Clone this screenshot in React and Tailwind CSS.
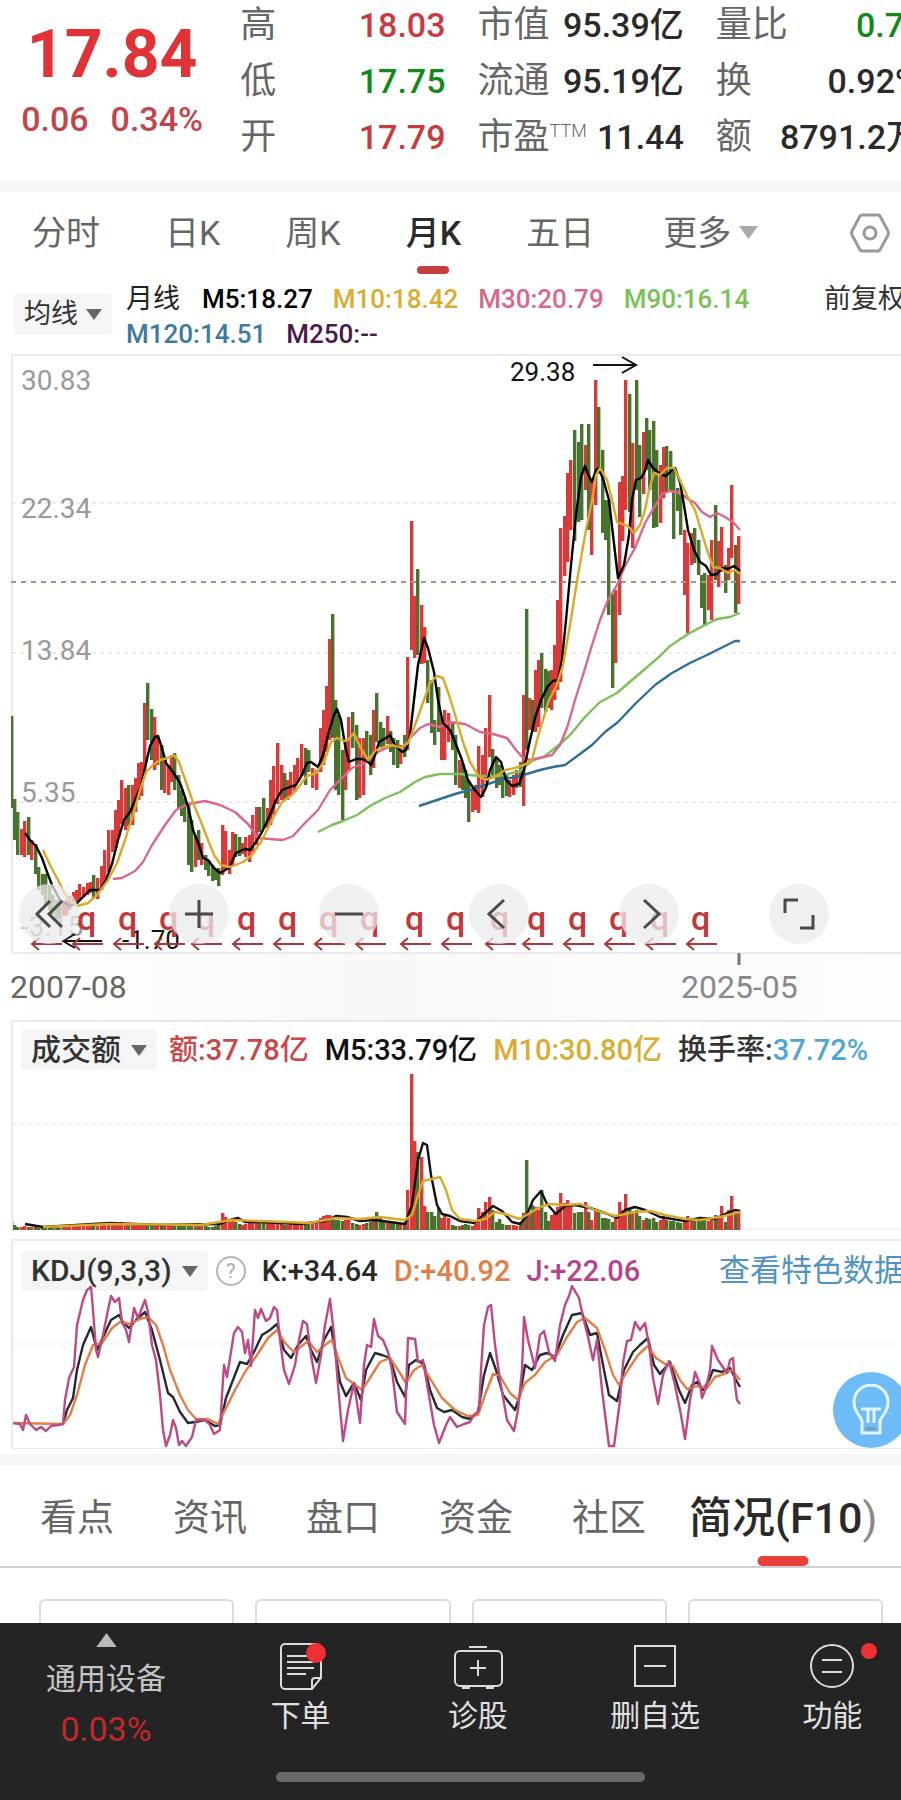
import { clsx } from 'clsx';

// x, high, low, direction (u = up, d = down), turnover bar height
const CANDLES = `
12 716 808 d 9|15 799 840 d 5|18 812 855 d 3|22 829 855 u 3|25 821 857 u 4|29 817 855 d 3|32 840 860 u 3|36 844 874 d 3
39 867 890 d 2|43 874 895 d 2|46 874 905 d 2|50 885 910 d 2|53 895 915 d 3|57 900 918 d 3|60 903 918 d 2|64 902 916 u 3
67 900 915 u 4|70 896 910 u 4|74 892 906 u 5|77 890 903 u 4|80 884 900 u 4|84 887 897 u 5|88 883 895 u 5|91 882 893 u 4
94 875 898 d 5|98 878 899 u 4|102 866 890 u 5|105 850 884 u 6|109 830 872 u 6|113 830 852 u 6|116 810 848 u 6|119 800 838 u 7
122 780 824 u 8|126 788 830 u 6|129 785 826 d 6|133 785 825 u 7|136 778 812 u 6|139 763 800 u 7|142 762 796 u 6|145 703 775 u 7
148 683 740 d 7|152 709 760 d 6|155 717 770 u 6|158 737 765 u 5|162 745 790 d 5|165 757 793 u 5|169 765 795 u 5|172 755 782 u 5
175 753 790 d 6|179 775 808 d 5|182 790 816 d 4|185 798 822 d 4|189 805 865 d 4|192 820 872 d 4|196 835 867 u 7|199 830 860 d 6
202 843 865 u 5|206 855 870 d 4|209 860 876 d 3|213 865 881 d 3|216 870 880 d 4|219 868 886 d 5|223 825 875 u 17|226 831 870 u 13
230 850 874 u 8|233 832 865 u 10|236 834 857 d 8|240 837 856 d 6|243 843 854 u 5|246 837 857 u 6|250 835 862 u 7|253 815 852 u 9
257 807 845 u 9|260 807 832 d 8|264 798 828 d 8|268 808 828 u 7|271 780 825 u 8|274 766 815 u 7|278 743 804 u 8|282 765 800 u 7
285 773 800 d 5|288 780 800 u 5|291 772 796 u 6|295 765 792 u 6|298 758 782 u 6|302 744 776 u 7|306 748 785 d 6|309 750 772 d 6
313 768 788 u 6|317 770 790 u 7|321 728 772 u 12|324 710 765 u 14|327 686 752 u 15|330 639 740 u 15|333 614 738 d 12|336 700 790 d 10
339 715 795 d 10|343 750 820 d 9|346 740 790 u 10|349 717 770 u 10|353 712 748 d 7|357 725 800 d 6|360 738 798 u 5|364 738 795 u 6
367 731 762 d 7|371 735 775 d 8|374 710 768 u 9|377 693 742 d 18|381 722 747 d 12|384 728 750 d 10|388 716 744 u 9|391 731 752 d 8
394 738 765 d 7|398 740 768 d 6|401 745 764 u 6|405 735 757 d 7|408 657 750 u 40|412 521 650 u 156|415 596 658 u 89|418 569 655 d 78
422 605 664 u 73|425 627 663 u 24|428 660 703 d 18|432 680 733 d 18|435 720 745 d 14|439 687 732 d 22|442 717 760 u 12|445 710 760 u 14
449 713 742 u 12|453 722 750 d 5|456 735 785 d 4|460 760 788 u 4|463 763 790 d 5|466 770 798 d 6|469 780 822 d 5|473 790 812 u 4
476 785 810 u 6|479 746 813 u 22|483 755 797 u 18|486 728 782 u 28|490 695 757 u 33|493 749 777 d 20|497 757 788 d 8|500 765 785 d 11
503 770 798 d 6|507 775 796 d 5|510 780 797 u 5|514 775 795 u 5|517 770 788 u 4|521 762 787 d 8|524 695 806 u 17|527 609 750 d 70
530 698 730 u 17|533 700 732 d 25|536 670 732 u 23|539 660 727 u 20|542 653 708 d 40|546 669 712 d 18|549 671 708 d 9|552 670 710 u 15
555 645 700 u 17|558 600 690 u 23|561 528 682 u 37|565 516 576 u 27|568 473 562 u 30|571 460 530 u 24|575 430 541 d 17|579 442 522 d 18
582 424 520 d 18|586 445 490 u 28|589 424 530 d 18|592 480 555 u 10|596 380 505 u 19|599 407 474 d 18|603 450 533 d 12|606 500 540 d 12
609 500 615 d 11|613 594 688 d 8|616 590 663 u 14|620 482 615 u 28|623 476 541 u 20|626 380 510 u 36|630 394 512 d 22|633 443 548 u 18
637 380 490 d 20|640 445 517 d 14|644 432 494 u 10|647 418 470 d 12|650 430 490 d 11|654 421 528 d 12|657 450 527 d 8|661 465 523 u 10
664 447 498 u 14|667 446 492 d 10|671 451 490 d 9|674 470 539 d 9|678 488 511 d 8|681 495 535 d 7|685 530 595 u 12|688 543 633 u 14
692 533 565 u 12|695 528 563 d 10|699 540 575 d 9|702 575 608 d 10|705 573 626 d 10|709 575 610 u 9|712 540 620 u 12|716 505 580 d 15
719 541 587 u 13|722 527 572 u 24|726 565 593 d 8|729 548 580 u 20|732 485 558 u 34|736 545 613 d 18|739 536 604 u 20`
  .trim()
  .split(/[|\n]/)
  .map((row) => {
    const [x, high, low, dir, turnover] = row.split(' ');
    return { x: +x, high: +high, low: +low, up: dir === 'u', turnover: +turnover };
  });

const PRICE_LINES = [
  {
    color: '#2f6f96',
    points: '419,806 440,799 455,794 470,790 485,785 500,780 520,776 540,770 553,767 565,765 580,754 592,745 605,732 618,722 635,704 655,685 672,673 690,663 707,655 725,646 735,641 740,641',
  },
  {
    color: '#7cc05a',
    points: '318,832 332,825 343,821 357,815 370,806 385,798 400,792 415,782 425,777 440,774 460,774 480,776 500,776 520,771 532,761 545,756 560,744 570,735 585,717 600,702 617,693 632,680 645,669 660,656 670,646 688,634 703,626 717,619 730,617 740,613',
  },
  {
    color: '#d9688c',
    points: '113,879 122,878 135,871 143,862 152,845 165,825 176,810 188,804 205,801 220,805 235,812 248,824 258,838 270,839 283,840 293,836 305,823 318,810 330,790 342,778 352,768 365,763 378,752 393,745 402,748 410,738 420,728 428,724 440,727 450,722 465,724 480,732 493,734 507,738 516,750 523,758 530,760 540,758 552,755 560,745 567,728 575,700 583,675 592,645 600,620 608,600 617,585 625,566 635,548 645,523 655,506 662,494 670,491 680,493 688,499 695,503 702,512 710,517 717,513 725,517 733,522 740,530',
  },
  {
    color: '#000000',
    points: '25,833 30,840 36,846 42,858 47,872 52,885 60,900 70,906 77,903 85,895 90,890 100,890 106,880 112,864 118,840 124,820 130,812 135,800 141,786 145,768 150,746 155,737 158,736 162,748 166,763 173,772 180,783 185,797 189,810 193,830 199,845 203,858 208,860 214,868 220,873 229,868 236,853 245,849 250,850 256,842 262,832 270,815 276,800 282,790 290,787 296,785 302,775 307,763 311,762 318,767 323,755 328,735 334,715 337,709 341,720 345,745 349,762 356,759 362,759 367,761 371,765 375,755 379,742 386,738 390,735 395,745 402,752 406,750 410,735 414,700 418,665 424,638 428,648 434,672 438,700 443,723 450,730 455,742 462,760 468,780 474,789 481,797 486,788 490,770 496,757 501,762 506,780 512,786 519,784 524,770 529,745 535,718 541,700 548,686 553,681 558,680 562,660 566,620 571,565 576,515 581,477 585,466 588,474 592,482 596,470 599,468 604,482 609,500 613,535 618,578 624,565 629,535 632,500 636,480 641,478 645,471 648,460 653,468 660,474 666,476 672,470 675,468 680,482 684,505 688,530 694,550 700,562 706,566 711,575 717,574 722,568 728,569 734,566 740,571',
  },
  {
    color: '#dba92a',
    points: '43,850 50,865 58,880 67,898 77,906 88,903 97,895 108,880 117,863 125,840 133,815 140,790 146,772 153,765 160,760 168,758 174,755 179,762 187,785 194,805 201,822 208,840 214,855 221,865 230,867 243,862 252,855 262,840 272,820 282,802 292,795 300,785 307,776 316,773 324,762 331,742 337,738 344,741 348,740 354,733 360,747 368,760 376,750 384,747 393,745 401,748 408,743 415,725 424,700 430,683 437,676 443,678 449,695 456,718 463,742 470,762 478,775 485,780 495,777 505,770 515,768 524,765 532,760 537,740 543,720 549,700 556,687 563,665 570,625 578,575 586,530 592,500 596,475 600,468 607,480 612,500 617,522 622,524 628,526 634,533 640,525 645,510 649,490 654,473 660,475 667,468 674,468 680,480 688,498 695,510 701,530 707,550 713,567 720,568 728,573 735,570 740,574',
  },
];

const TURNOVER_LINES = [
  {
    color: '#111111',
    points: '25,1224 43,1227 110,1223 160,1225 220,1224 230,1220 238,1218 245,1222 260,1222 300,1224 325,1221 336,1216 347,1217 360,1221 375,1220 390,1222 405,1224 412,1205 418,1160 423,1143 427,1145 431,1175 437,1205 442,1214 450,1216 460,1221 475,1223 483,1215 493,1206 502,1211 512,1222 520,1224 526,1217 533,1200 541,1191 547,1204 556,1214 565,1206 575,1205 590,1208 605,1213 617,1218 625,1210 635,1207 645,1210 660,1217 685,1221 700,1218 715,1219 725,1214 735,1210 740,1211',
  },
  {
    color: '#dba92a',
    points: '43,1227 110,1224 200,1225 232,1220 260,1221 310,1223 335,1218 360,1219 380,1217 405,1220 412,1215 418,1195 423,1181 432,1179 440,1177 446,1190 452,1210 460,1219 475,1221 485,1219 495,1212 505,1214 520,1219 530,1213 540,1207 550,1204 565,1205 580,1204 595,1210 615,1216 635,1212 650,1211 665,1215 685,1219 700,1220 720,1217 740,1212',
  },
];

const KDJ_LINES = [
  {
    color: '#262a2e',
    points: '63,1424 67,1410 73,1398 77,1370 83,1345 91,1327 97,1350 104,1335 111,1320 119,1315 123,1322 129,1328 137,1319 145,1312 152,1330 160,1360 168,1393 173,1397 180,1412 188,1423 195,1422 205,1420 215,1426 220,1425 226,1398 233,1380 240,1362 247,1364 254,1352 262,1335 270,1330 277,1324 284,1350 291,1358 298,1345 306,1336 311,1350 317,1362 324,1340 331,1327 335,1350 340,1382 346,1396 354,1383 361,1400 366,1370 375,1353 382,1355 390,1358 397,1382 405,1397 409,1365 416,1360 424,1364 430,1390 437,1408 444,1412 452,1410 462,1417 470,1419 478,1412 484,1375 490,1353 496,1370 503,1395 515,1410 520,1395 525,1365 532,1370 540,1355 547,1353 555,1357 563,1335 572,1315 582,1313 590,1335 597,1333 603,1365 609,1395 617,1401 624,1370 633,1352 640,1345 648,1338 654,1365 660,1374 670,1362 679,1390 685,1403 692,1385 697,1382 703,1390 709,1380 713,1370 722,1372 730,1368 736,1380 740,1387',
  },
  {
    color: '#e08048',
    points: '12,1423 63,1424 70,1415 77,1395 85,1365 93,1345 102,1343 112,1328 120,1322 130,1324 140,1319 148,1317 156,1325 163,1345 170,1370 180,1395 188,1410 196,1419 208,1419 218,1424 226,1408 235,1390 245,1372 257,1355 268,1338 277,1330 285,1343 294,1352 303,1345 308,1341 317,1352 325,1345 332,1340 339,1360 346,1378 354,1384 362,1390 370,1378 380,1362 390,1358 398,1370 406,1383 414,1370 422,1365 431,1380 442,1398 455,1410 468,1416 478,1415 485,1395 493,1374 500,1376 510,1393 518,1400 525,1383 535,1375 545,1362 557,1355 567,1337 577,1322 585,1318 597,1328 605,1350 613,1375 619,1385 628,1370 638,1355 648,1346 656,1358 665,1364 673,1366 680,1380 687,1389 697,1386 707,1388 715,1377 724,1374 732,1370 740,1380',
  },
  {
    color: '#bb4a86',
    points: '12,1423 20,1424 23,1430 26,1415 30,1424 36,1430 41,1427 46,1431 51,1426 58,1425 63,1424 65,1400 69,1378 74,1367 77,1325 83,1300 87,1290 91,1287 93,1310 96,1350 98,1357 103,1335 108,1310 111,1296 115,1302 119,1298 122,1322 126,1330 129,1342 134,1308 138,1318 145,1300 148,1312 152,1345 156,1360 160,1395 163,1430 166,1446 170,1435 173,1420 176,1428 179,1445 182,1441 186,1446 192,1437 196,1420 205,1420 210,1425 214,1434 220,1430 222,1395 224,1365 227,1377 230,1358 234,1333 238,1327 242,1332 245,1353 248,1340 251,1366 255,1310 258,1318 261,1309 266,1321 270,1318 274,1307 277,1310 280,1340 284,1370 289,1384 295,1365 299,1340 303,1321 307,1324 311,1355 316,1383 321,1355 325,1325 330,1299 334,1335 338,1385 343,1441 348,1410 354,1383 360,1423 364,1365 367,1345 371,1347 374,1319 378,1336 383,1340 388,1352 392,1370 397,1412 405,1424 407,1365 408,1338 415,1339 418,1362 423,1360 428,1390 434,1425 439,1443 446,1425 450,1417 457,1427 464,1424 470,1422 474,1415 479,1410 481,1370 484,1325 488,1307 491,1305 495,1345 500,1380 507,1420 514,1431 518,1410 522,1370 524,1317 528,1340 535,1368 540,1335 544,1331 549,1352 555,1361 560,1325 565,1305 569,1296 572,1286 579,1298 583,1317 588,1337 593,1360 597,1340 602,1390 609,1446 614,1446 620,1400 623,1363 627,1341 631,1340 635,1322 640,1330 645,1323 649,1345 653,1378 658,1404 663,1375 669,1361 675,1385 681,1415 685,1439 690,1400 695,1372 700,1384 702,1398 706,1388 710,1370 712,1346 718,1360 727,1373 730,1360 733,1358 735,1385 737,1400 740,1404',
  },
];

// start of every dividend arrow on the time axis
const DIVIDENDS = [31, 72, 113, 154, 191, 232, 273, 314, 355, 400, 441, 485, 522, 563, 604, 645, 686];

const QUOTES = [
  [
    { label: '高', value: '18.03', tone: 'text-[#c9393d]' },
    { label: '低', value: '17.75', tone: 'text-[#118a1c]' },
    { label: '开', value: '17.79', tone: 'text-[#c9393d]' },
  ],
  [
    { label: '市值', value: '95.39亿' },
    { label: '流通', value: '95.19亿' },
    { label: '市盈', sup: 'TTM', value: '11.44' },
  ],
  [
    { label: '量比', value: '0.7', tone: 'text-[#118a1c] pr-6' },
    { label: '换', value: '0.92%', tone: 'text-[#2a2a2a] pr-2' },
    { label: '额', value: '8791.2万', tone: 'text-[#2a2a2a] pr-2' },
  ],
];

const PERIODS = ['分时', '日K', '周K', '月K', '五日'];
const SECTIONS = ['看点', '资讯', '盘口', '资金', '社区'];

function Caret({ up = false, className }) {
  return (
    <svg viewBox="0 0 16 11" className={className} fill="currentColor" aria-hidden="true">
      <path d={up ? 'M8 0 16 11H0z' : 'M0 0h16L8 11z'} />
    </svg>
  );
}

function Lines({ lines }) {
  return lines.map((line) => (
    <polyline key={line.color} points={line.points} fill="none" stroke={line.color} strokeWidth="2.4" strokeLinejoin="round" />
  ));
}

function QuoteHeader() {
  return (
    <header className="-mt-[3px] -mr-[27px] grid grid-cols-[208fr_205fr_206fr_212fr] gap-x-8 pb-4">
      <div className="pt-4 pl-4 text-center">
        <div className="pt-1 text-[66px] leading-[76px] font-bold text-[#e03338]">17.84</div>
        <div className="flex justify-center gap-[22px] pt-[3px] text-[34px] leading-[46px] font-medium text-[#c2454a]">
          <span>0.06</span>
          <span>0.34%</span>
        </div>
      </div>
      {QUOTES.map((column) => (
        <dl key={column[0].label}>
          {column.map((q) => (
            <div key={q.label} className="flex h-14 items-center justify-between whitespace-nowrap">
              <dt className="flex text-4xl text-[#666]">
                {q.label}
                {q.sup && <sup className="top-1 text-lg leading-5 font-light">{q.sup}</sup>}
              </dt>
              <dd className={clsx('text-[34px] font-medium', q.tone ?? 'text-[#2a2a2a]')}>{q.value}</dd>
            </div>
          ))}
        </dl>
      ))}
    </header>
  );
}

function PeriodTabs() {
  return (
    <nav className="flex items-center gap-[65px] pr-[10px] pl-8 text-[34px] whitespace-nowrap text-[#666]">
      {PERIODS.map((p) => (
        <button key={p} type="button" className={clsx('relative h-[82px]', p === '月K' && 'font-medium text-[#2a2a2a]')}>
          {p}
          {p === '月K' && <span className="absolute bottom-0 left-1/2 h-2 w-8 -translate-x-1/2 rounded-full bg-[#c93c40]" />}
        </button>
      ))}
      <button type="button" className="ml-1 flex h-[82px] items-center gap-2">
        更多
        <Caret className="w-[19px] text-[#aaa]" />
      </button>
      <button type="button" aria-label="设置" className="ml-auto shrink-0">
        <svg viewBox="0 0 42 40" className="w-[42px]" fill="none" stroke="#999" strokeWidth="3">
          <path d="M13 2h16a3 3 0 0 1 2 1l8 15a4 4 0 0 1 0 4l-8 15a3 3 0 0 1-2 1H13a3 3 0 0 1-2-1L3 22a4 4 0 0 1 0-4l8-15a3 3 0 0 1 2-1z" />
          <circle cx="21" cy="20" r="6" />
        </svg>
      </button>
    </nav>
  );
}

function AverageLegend() {
  return (
    <div className="flex items-start pt-2 pb-[2px] pl-[14px] text-[26px] leading-[35px] font-medium whitespace-nowrap">
      <button type="button" className="mt-3 flex h-[41px] items-center gap-2 rounded bg-[#f5f5f5] px-[10px] text-[27px] font-normal text-[#333]">
        均线
        <Caret className="w-4 text-[#666]" />
      </button>
      <div className="ml-[14px] grow">
        <div className="flex gap-5">
          <span className="pr-[2px] text-[27px] font-normal text-[#222]">月线</span>
          <span className="text-black">M5:18.27</span>
          <span className="text-[#d9ac33]">M10:18.42</span>
          <span className="text-[#d9688c]">M30:20.79</span>
          <span className="text-[#7cc05a]">M90:16.14</span>
        </div>
        <div className="flex gap-5">
          <span className="text-[#3d7b9c]">M120:14.51</span>
          <span className="text-[#4a1a4c]">M250:--</span>
        </div>
      </div>
      <button type="button" className="-mr-1 text-[27px] font-normal text-[#333]">前复权</button>
    </div>
  );
}

function ChartButton({ label, children }) {
  return (
    <button type="button" aria-label={label} className="flex size-[60px] items-center justify-center rounded-full bg-[#ebebeb]/75">
      <svg viewBox="0 0 32 32" className="size-8" fill="none" stroke="#4a4a4a" strokeWidth="3">
        {children}
      </svg>
    </button>
  );
}

function PriceChart() {
  return (
    <section className="relative pl-[11px]">
      <svg viewBox="11 354 890 666" className="block w-full" role="img" aria-label="月K">
        <defs>
          <linearGradient id="axisShade" x1="0" x2="1">
            <stop offset="0" stopColor="#fff" />
            <stop offset="0.4" stopColor="#f8f8f8" />
            <stop offset="1" stopColor="#fdfdfd" />
          </linearGradient>
        </defs>
        <rect x="11" y="954" width="890" height="66" fill="url(#axisShade)" />
        <path d="M901 355H12V953H901" fill="none" stroke="#ebebeb" strokeWidth="2" />
        <path d="M12 503H901M12 653H901M12 802H901" stroke="#d8d8d8" strokeDasharray="4 4" />
        <g fontSize="28" fill="#999">
          <text x="21" y="390">30.83</text>
          <text x="21" y="518">22.34</text>
          <text x="21" y="660">13.84</text>
          <text x="21" y="802">5.35</text>
          <text x="21" y="936">-3.15</text>
        </g>
        {CANDLES.map((c) => (
          <rect key={c.x} x={c.x - 2} y={c.high} width="3.4" height={c.low - c.high} fill={c.up ? '#d83a3a' : '#4a722f'} />
        ))}
        <path d="M11 582H901" stroke="#a8977c" strokeWidth="2" strokeDasharray="5 5" />
        <Lines lines={PRICE_LINES} />
        <g fontSize="26" fill="#111">
          <text x="510" y="381">29.38</text>
          <text x="122" y="949">-1.70</text>
        </g>
        <path d="M593 365H636M622 357l14 8-14 8M102 941H63M75 934l-12 7 12 7" fill="none" stroke="#111" strokeWidth="2" />
        <g fill="#c2383c">
          {DIVIDENDS.map((x) => (
            <g key={x}>
              {x > 31 && <text x={x + 5} y="930" fontSize="34" fontWeight="500">q</text>}
              <path d={`M${x + 31} 944H${x + 1}M${x + 8} 938l-7 6 7 6`} fill="none" stroke="#a8383c" strokeWidth="2" />
            </g>
          ))}
        </g>
        <path d="M739 953V965" stroke="#777" strokeWidth="3" />
        <g fontSize="32">
          <text x="10" y="998" fill="#666">2007-08</text>
          <text x="681" y="998" fill="#888">2025-05</text>
        </g>
      </svg>
      <div className="absolute bottom-[76px] left-[19px] flex gap-[90px]">
        <ChartButton label="最早">
          <path d="M17 3 4 16l13 13M29 3 16 16l13 13" />
        </ChartButton>
        <ChartButton label="放大">
          <path d="M16 2v28M2 16h28" />
        </ChartButton>
        <ChartButton label="缩小">
          <path d="M2 16h28" />
        </ChartButton>
        <ChartButton label="向左">
          <path d="M21 2 6 16l15 14" />
        </ChartButton>
        <ChartButton label="向右">
          <path d="m11 2 15 14-15 14" />
        </ChartButton>
        <ChartButton label="全屏">
          <path d="M2 15V2h13M30 17v13H17" />
        </ChartButton>
      </div>
    </section>
  );
}

function IndicatorButton({ children }) {
  return (
    <button type="button" className="flex h-10 items-center gap-[10px] rounded bg-[#f5f5f5] px-[10px] text-[30px] text-[#333]">
      {children}
      <Caret className="w-4 text-[#666]" />
    </button>
  );
}

function TurnoverPanel() {
  return (
    <section className="ml-[11px] border-t-2 border-l-2 border-[#ebebeb]">
      <div className="flex items-center gap-4 pt-2 pl-2 text-[29px] leading-10 font-medium whitespace-nowrap">
        <IndicatorButton>成交额</IndicatorButton>
        <span className="-ml-1 text-[#c9484c]">额:37.78亿</span>
        <span className="text-[#111]">M5:33.79亿</span>
        <span className="text-[#d9ac33]">M10:30.80亿</span>
        <span className="text-[#333]">
          换手率:<span className="text-[#4fa6d0]">37.72%</span>
        </span>
      </div>
      <svg viewBox="13 1070 888 161" className="block w-full" role="img" aria-label="成交额">
        <path d="M13 1124H901" stroke="#e4e4e4" strokeDasharray="4 4" />
        {CANDLES.map((c) => (
          <rect key={c.x} x={c.x - 2} y={1230 - c.turnover} width="3.4" height={c.turnover} fill={c.up ? '#d83a3a' : '#4a722f'} />
        ))}
        <path d="M741 1229H901" stroke="#e6e6e6" />
        <Lines lines={TURNOVER_LINES} />
      </svg>
    </section>
  );
}

function KdjPanel() {
  return (
    <section className="relative mt-2 ml-[11px] border-t-2 border-b border-l-2 border-[#ebebeb]">
      <div className="flex items-center gap-4 pt-[10px] pl-2 text-[29px] leading-10 font-medium whitespace-nowrap">
        <IndicatorButton>KDJ(9,3,3)</IndicatorButton>
        <button
          type="button"
          aria-label="指标说明"
          className="-ml-2 flex size-[30px] items-center justify-center rounded-full border-2 border-[#b5b5b5] text-xl font-normal text-[#aaa]"
        >
          ?
        </button>
        <span className="text-[#2a2a2a]">K:+34.64</span>
        <span className="text-[#e08048]">D:+40.92</span>
        <span className="text-[#b5448a]">J:+22.06</span>
        <a href="#feature" className="-mr-1 ml-auto text-[31px] font-normal text-[#4f94c4]">
          查看特色数据
        </a>
      </div>
      <svg viewBox="13 1285 888 163" className="relative -mt-[6px] block w-full" role="img" aria-label="KDJ">
        <path d="M13 1344H901" stroke="#e4e4e4" strokeDasharray="4 4" />
        <Lines lines={KDJ_LINES} />
      </svg>
      <button type="button" aria-label="提示" className="absolute -right-2 bottom-0 flex size-[76px] items-center justify-center rounded-full bg-[#6dbbf7]">
        <svg viewBox="0 0 38 52" className="w-[38px]" fill="none" stroke="#e4f6fb" strokeWidth="3">
          <path d="M10 38c0-6-8-8-8-20a17 17 0 0 1 34 0c0 12-8 14-8 20v11H10z" strokeLinejoin="round" />
          <path d="M9 25h20M16 26v13M22 26v13" />
          <path d="M14 45h10" stroke="#7a9ab0" />
        </svg>
      </button>
    </section>
  );
}

function SectionTabs() {
  return (
    <nav className="flex h-[103px] items-center gap-[59px] border-b-2 border-[#d0d0d0] pt-[6px] pl-10 text-[37px] whitespace-nowrap text-[#666]">
      {SECTIONS.map((s) => (
        <button key={s} type="button">
          {s}
        </button>
      ))}
      <button type="button" className="relative -ml-4 h-full text-[43px] font-medium text-[#2a2a2a]">
        简况(F10<span className="font-normal text-[#888]">)</span>
        <span className="absolute bottom-0 left-1/2 h-[10px] w-[51px] -translate-x-1/2 rounded-full bg-[#e8413a]" />
      </button>
    </nav>
  );
}

function BarItem({ label, dot, children }) {
  return (
    <button type="button" className="flex flex-1 flex-col items-center pt-[18px] text-[30px] leading-9 text-[#e0e0e0]">
      <span className="relative mb-[7px]">
        <svg viewBox="0 0 50 50" className="size-[50px]" fill="none" stroke="#dcdcdc" strokeWidth="2">
          {children}
        </svg>
        {dot && <span className={clsx('absolute rounded-full bg-[#ee2f34]', dot)} />}
      </span>
      {label}
    </button>
  );
}

function BottomBar() {
  return (
    <footer className="-mr-5 bg-[#242424] pb-[18px]">
      <div className="flex h-[149px] items-start">
        <button type="button" className="flex w-[212px] flex-col items-center pt-[10px] text-[#c4c4c4]">
          <Caret up className="w-[21px] text-[#b8b8b8]" />
          <span className="mt-3 text-[30px] leading-10">通用设备</span>
          <span className="mt-[10px] text-[34px] leading-10 font-normal text-[#c2282c]">0.03%</span>
        </button>
        <BarItem label="下单" dot="top-[2px] left-[30px] size-5">
          <path d="M9 3h31a5 5 0 0 1 5 5v29L36 48H9a4 4 0 0 1-4-4V7a4 4 0 0 1 4-4zM45 37h-6a3 3 0 0 0-3 3v8" />
          <path d="M11 15h22M11 21h26M11 27h27M11 33h19" />
        </BarItem>
        <BarItem label="诊股">
          <rect x="2" y="10" width="47" height="35" rx="5" />
          <path d="M16 6h18M25 19v16M17 27h16M9 47h8M33 47h8" />
        </BarItem>
        <BarItem label="删自选">
          <path d="M5 5h40v40H5zM14 25h22" />
        </BarItem>
        <BarItem label="功能" dot="top-[2px] left-[54px] size-4">
          <circle cx="25" cy="25" r="21" />
          <path d="M15 19h20M15 31h20" />
        </BarItem>
      </div>
      <div className="mx-auto h-[10px] w-2/5 rounded-full bg-[#6a6a6a]" />
    </footer>
  );
}

export default function App() {
  return (
    <div className="overflow-hidden bg-white font-[Roboto,'Noto_Sans_CJK_SC',sans-serif]">
      <QuoteHeader />
      <div className="h-[11px] bg-[#f6f6f6]" />
      <PeriodTabs />
      <AverageLegend />
      <PriceChart />
      <TurnoverPanel />
      <KdjPanel />
      <div className="mt-[5px] h-[11px] bg-[#f6f6f6]" />
      <SectionTabs />
      <div className="grid grid-cols-4 gap-[21px] pt-[31px] pr-[18px] pl-[39px]">
        {[0, 1, 2, 3].map((i) => (
          <div key={i} className="h-6 rounded-t-md border-2 border-b-0 border-[#dcdcdc]" />
        ))}
      </div>
      <BottomBar />
    </div>
  );
}
